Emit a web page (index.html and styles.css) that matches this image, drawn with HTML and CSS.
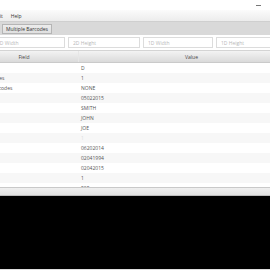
FILE: index.html
```html
<!DOCTYPE html>
<html>
<head>
<meta charset="utf-8">
<link rel="stylesheet" href="styles.css">
</head>
<body>
<div class="app">
  <div class="titlebar"><span class="min"></span></div>
  <div class="menubar"><span class="mi">File</span><span class="mi">Edit</span><span class="mi">Help</span></div>
  <div class="toolbar"><button class="tab">Multiple Barcodes</button></div>
  <div class="inputs">
    <input class="field in1" placeholder="2D Width">
    <input class="field in2" placeholder="2D Height">
    <input class="field in3" placeholder="1D Width">
    <input class="field in4" placeholder="1D Height">
  </div>
  <div class="grid">
    <div class="head"><div class="hc">Field</div><div class="hc">Value</div></div>
    <div class="rows">
      <div class="row"><div class="c">Type</div><div class="c">D</div></div>
      <div class="row"><div class="c">Number of Pages</div><div class="c">1</div></div>
      <div class="row"><div class="c">Number of Barcodes</div><div class="c">NONE</div></div>
      <div class="row"><div class="c">Date</div><div class="c">05022015</div></div>
      <div class="row"><div class="c">Last Name</div><div class="c">SMITH</div></div>
      <div class="row"><div class="c">First Name</div><div class="c">JOHN</div></div>
      <div class="row"><div class="c">Middle</div><div class="c">JOE</div></div>
      <div class="row"><div class="c">Suffix</div><div class="c faint">1</div></div>
      <div class="row"><div class="c">Issue Date</div><div class="c">06202014</div></div>
      <div class="row"><div class="c">Birth Date</div><div class="c">02041994</div></div>
      <div class="row"><div class="c">Expiry Date</div><div class="c">02042015</div></div>
      <div class="row"><div class="c">Sex</div><div class="c">1</div></div>
      <div class="row"><div class="c">Eyes</div><div class="c">505</div></div>
    </div>
    <div class="hscroll"></div>
  </div>
  <div class="console"></div>
</div>
</body>
</html>
```
FILE: styles.css
```css
html, body {
  margin: 0;
  padding: 0;
}
body {
  width: 270px;
  height: 270px;
  overflow: hidden;
  background: #fff;
  font-family: "Open Sans", "Noto Sans", sans-serif;
  font-size: 5px;
  color: #444;
}
.app {
  width: 270px;
  height: 270px;
  overflow: hidden;
  display: flex;
  flex-direction: column;
}
.titlebar {
  height: 10px;
  flex: none;
  display: flex;
  justify-content: flex-end;
  align-items: center;
  padding-right: 9px;
  background: #fff;
}
.min {
  width: 5px;
  height: 1px;
  background: #777;
}
.menubar {
  height: 11px;
  flex: none;
  display: flex;
  align-items: center;
  gap: 8px;
  margin-left: -22px;
  background: linear-gradient(#fbfbfb, #ececec);
  color: #333;
}
.toolbar {
  height: 14px;
  flex: none;
  display: flex;
  align-items: center;
  padding-left: 2px;
  background: #d9d9d9;
  border-top: 1px solid #cfcfcf;
  box-sizing: border-box;
}
.tab {
  height: 10px;
  padding: 0 3px;
  margin: 0;
  border: 1px solid #b5b5b5;
  background: linear-gradient(#ececec, #e0e0e0);
  font: inherit;
  color: #333;
  line-height: 8px;
}
.inputs {
  height: 15px;
  flex: none;
  display: flex;
  align-items: center;
  gap: 3px;
  margin-left: -8px;
}
.field {
  flex: none;
  height: 11px;
  box-sizing: border-box;
  border: 1px solid #dcdcdc;
  padding: 0 0 0 4px;
  margin: 0;
  font: inherit;
  background: #fff;
  outline: none;
}
.field::placeholder {
  color: #b8b8b8;
}
.in1 { width: 73px; }
.in2 { width: 72px; }
.in3 { width: 70px; }
.in4 { width: 72px; }
.grid {
  margin-left: -30px;
  width: 334px;
  flex: none;
  border-top: 1px solid #d4d4d4;
}
.head {
  display: grid;
  grid-template-columns: 108px 1fr;
  height: 11px;
  background: linear-gradient(#f3f3f3, #dadada);
  border-bottom: 1px solid #cacaca;
}
.hc {
  display: flex;
  align-items: center;
  justify-content: center;
  color: #444;
}
.hc + .hc {
  border-left: 1px solid #e6e6e6;
}
.rows {
  height: 124px;
  overflow: hidden;
}
.row {
  display: grid;
  grid-template-columns: 108px 1fr;
  height: 10px;
  align-items: center;
  background: #fff;
}
.row:nth-child(even) {
  background: #f7f7f7;
}
.c {
  padding-left: 3px;
  white-space: nowrap;
  overflow: hidden;
  color: #555;
}
.c:first-child {
  text-indent: -9px;
}
.faint {
  color: #dcdcdc;
}
.hscroll {
  height: 7px;
  border-top: 1px solid #c9c9c9;
  border-bottom: 1px solid #bdbdbd;
  background: linear-gradient(#efefef, #e2e2e2);
}
.console {
  flex: 1;
  background: #000;
  border-bottom: 1px solid #dedede;
}
```
